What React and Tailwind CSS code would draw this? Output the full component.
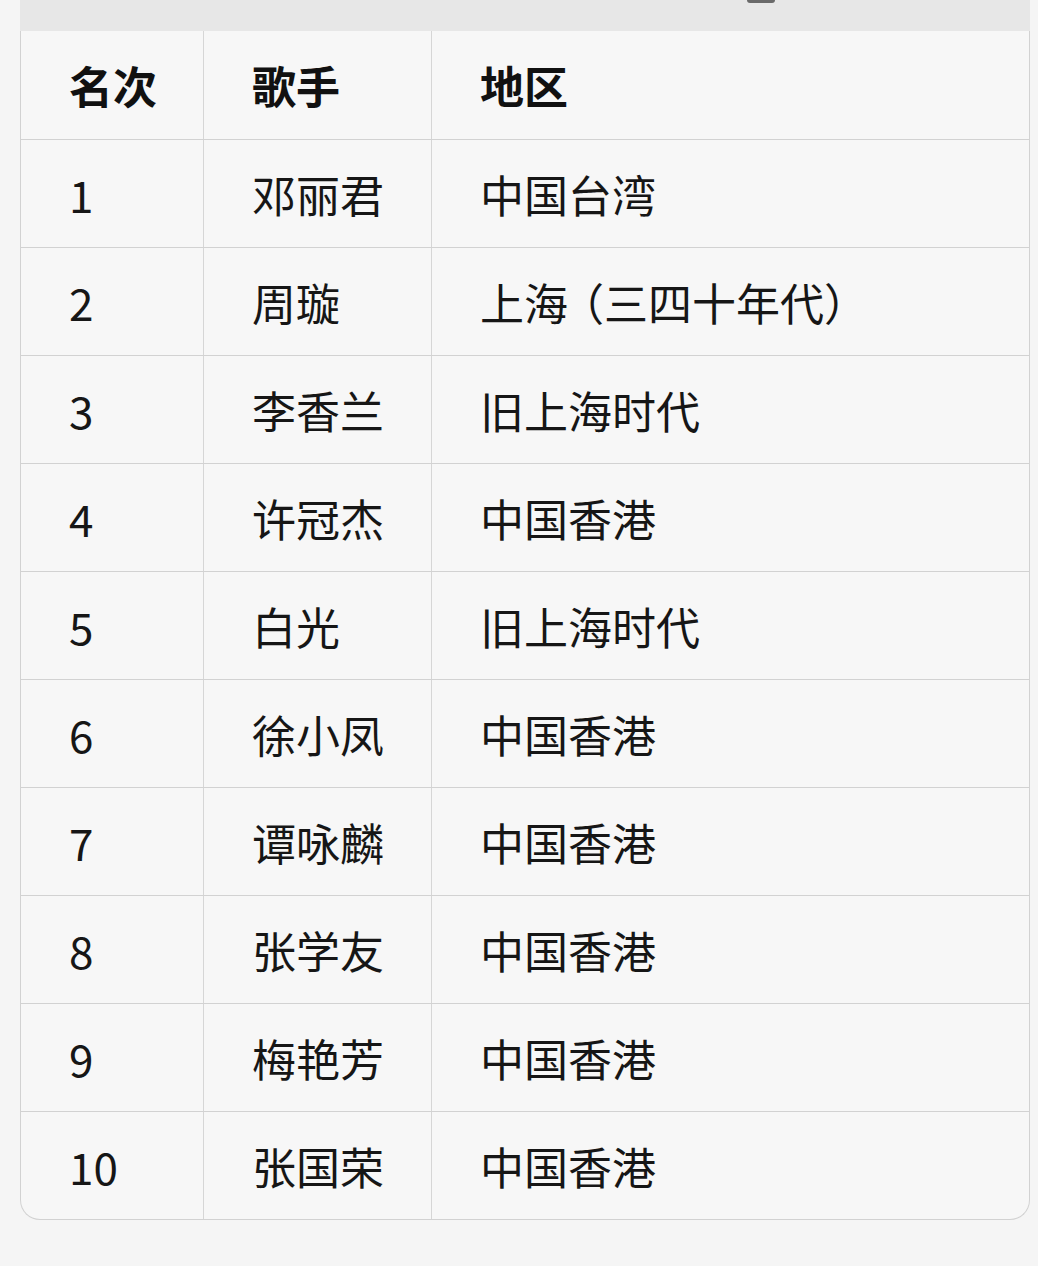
const rows = [
  ["1", "邓丽君", "中国台湾"],
  ["2", "周璇", <>上海<span className="pl-[14px] [font-feature-settings:'halt']">（</span>三四十年代）</>],
  ["3", "李香兰", "旧上海时代"],
  ["4", "许冠杰", "中国香港"],
  ["5", "白光", "旧上海时代"],
  ["6", "徐小凤", "中国香港"],
  ["7", "谭咏麟", "中国香港"],
  ["8", "张学友", "中国香港"],
  ["9", "梅艳芳", "中国香港"],
  ["10", "张国荣", "中国香港"],
];

const font = "font-['Noto_Sans_CJK_SC','Noto_Sans',sans-serif]";

function Cell({ children, last, head }) {
  return (
    <div
      className={`flex items-center pl-[48px] border-[#d6d6d6] ${last ? "" : "border-r"} ${
        head ? "font-bold text-[#111]" : "text-[#161616]"
      }`}
    >
      <span>{children}</span>
    </div>
  );
}

export default function App() {
  return (
    <div className={`min-h-screen bg-[#f5f5f5] ${font}`}>
      <div className="ml-[20px] w-[1010px]">
        <div className="relative h-[31px] bg-[#e7e7e7]">
          <div className="absolute left-[727px] top-0 w-[28px] h-[3px] rounded-b-sm bg-[#6a6a6a]" />
        </div>
        <div className="border-x border-b border-[#d2d2d2] rounded-b-[20px] bg-[#f7f7f7] overflow-hidden text-[44px] leading-none">
          <div className="grid grid-cols-[183px_228px_1fr] h-[109px] border-b border-[#d2d2d2]">
            <Cell head>名次</Cell>
            <Cell head>歌手</Cell>
            <Cell head last>地区</Cell>
          </div>
          {rows.map((r, i) => (
            <div
              key={r[0]}
              className={`grid grid-cols-[183px_228px_1fr] ${
                i === rows.length - 1 ? "h-[107px]" : "h-[108px] border-b border-[#d2d2d2]"
              }`}
            >
              <Cell>{r[0]}</Cell>
              <Cell>{r[1]}</Cell>
              <Cell last>{r[2]}</Cell>
            </div>
          ))}
        </div>
      </div>
    </div>
  );
}
